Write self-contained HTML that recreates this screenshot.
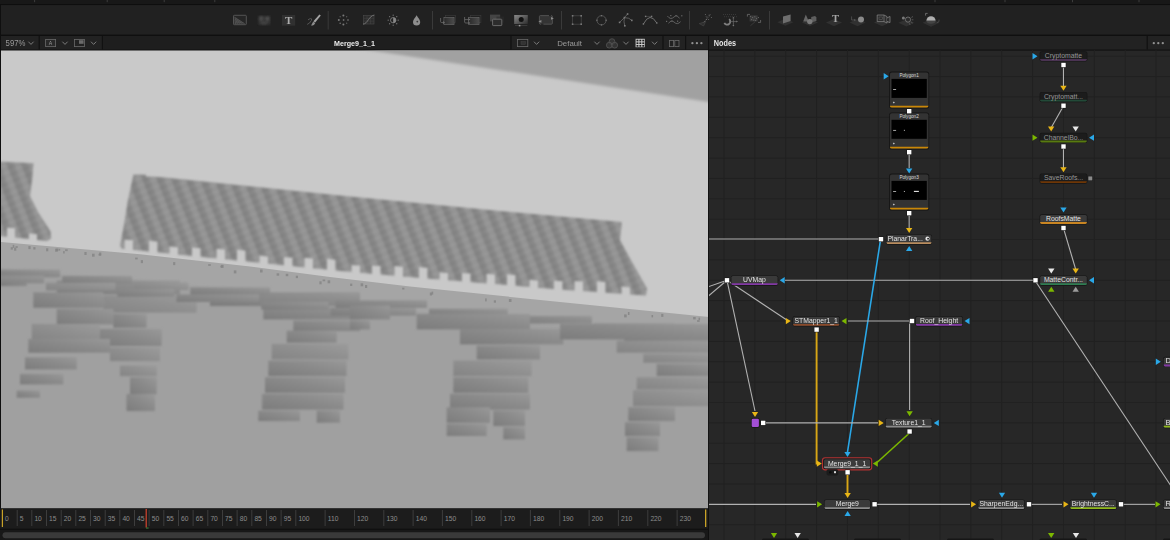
<!DOCTYPE html>
<html lang="en"><head><meta charset="utf-8"><title>Fusion - Merge9_1_1</title>
<style>html,body{margin:0;padding:0;background:#242424;width:1170px;height:540px;overflow:hidden}svg{display:block}text{white-space:pre}</style>
</head><body>
<svg width="1170" height="540" viewBox="0 0 1170 540" font-family="'Liberation Sans', sans-serif">
<defs>
<pattern id="roof" width="14.4" height="10" patternUnits="userSpaceOnUse" patternTransform="skewX(21)">
 <rect width="14.4" height="10" fill="#999999"/>
 <rect x="0" width="7.4" height="10" fill="#848484"/>
 <rect x="7.4" y="0" width="7" height="3" fill="#8f8f8f"/>
 <rect x="0" y="5" width="7.4" height="2.4" fill="#7e7e7e"/>
</pattern>
<filter id="b3" x="-3%" y="-8%" width="106%" height="116%"><feGaussianBlur stdDeviation="1.3"/></filter>
<linearGradient id="brk" x1="0" x2="1" y1="1" y2="0">
 <stop offset="0" stop-color="#7c7c7c"/><stop offset="0.55" stop-color="#8a8a8a"/><stop offset="1" stop-color="#989898"/>
</linearGradient>
<linearGradient id="brk2" x1="0" x2="1" y1="1" y2="0">
 <stop offset="0" stop-color="#848484"/><stop offset="0.55" stop-color="#909090"/><stop offset="1" stop-color="#9b9b9b"/>
</linearGradient>
<linearGradient id="tg" x1="0" x2="1" y1="0" y2="0"><stop offset="0" stop-color="#2c2c2c"/><stop offset="1" stop-color="#4a4a4a"/></linearGradient>
<linearGradient id="tg2" x1="0" x2="1" y1="0" y2="1"><stop offset="0" stop-color="#8a8a8a"/><stop offset="1" stop-color="#2e2e2e"/></linearGradient>
<filter id="b0"><feGaussianBlur stdDeviation="0.5"/></filter>
<filter id="b1" x="-5%" y="-5%" width="110%" height="110%"><feGaussianBlur stdDeviation="0.8"/></filter>
<filter id="b2" x="-5%" y="-20%" width="110%" height="140%"><feGaussianBlur stdDeviation="1.6"/></filter>
<clipPath id="vw"><rect x="1" y="50.6" width="707.1" height="457.7"/></clipPath>
<clipPath id="np"><rect x="709" y="50.7" width="461" height="490"/></clipPath>
</defs>
<rect width="1170" height="540" fill="#242424"/>
<rect width="1170" height="4.3" fill="#181818"/>
<rect x="34.1" y="0" width="1" height="2.2" fill="#3c3c3c"/>
<rect x="106.7" y="0" width="1" height="2.2" fill="#3c3c3c"/>
<rect x="163.7" y="0" width="1" height="2.2" fill="#3c3c3c"/>
<rect x="214.3" y="0" width="1" height="2.2" fill="#3c3c3c"/>
<rect x="934.5" y="0" width="1" height="2.2" fill="#3c3c3c"/>
<rect x="1004.5" y="0" width="1" height="2.2" fill="#3c3c3c"/>
<rect x="1072.0" y="0" width="1" height="2.2" fill="#3c3c3c"/>
<rect x="1138.5" y="0" width="1" height="2.2" fill="#3c3c3c"/>
<rect y="4" width="1170" height="1.2" fill="#0e0e0e"/>
<rect y="5.2" width="1170" height="29.4" fill="#212121"/>
<rect y="34.6" width="1170" height="1.4" fill="#0f0f0f"/>
<rect y="36" width="1170" height="13.6" fill="#222222"/>
<rect x="103" y="36" width="407.4" height="13.6" fill="#1e1e1e"/>
<rect y="49.6" width="1170" height="1.1" fill="#0d0d0d"/>
<g clip-path="url(#vw)">
<rect x="0" y="50" width="709" height="460" fill="#c9c9c9"/>
<polygon points="355,48 712,48 712,102.5" fill="#a1a1a1" filter="url(#b2)"/>
<polygon points="-2,241.8 140,254.2 250,266.5 330,276.9 410,286.6 560,302.0 712,317.4 712,512 -2,512" fill="#a5a5a5"/>
<polygon points="-2,268.8 140,280.2 250,291.7 330,301.6 410,310.7 560,325.1 712,339.4 712,512 -2,512" fill="#a0a0a0" filter="url(#b2)"/>
<g filter="url(#b1)">
<rect x="0.0" y="272.3" width="26.7" height="13.8" fill="url(#brk)"/>
<rect x="56.7" y="280.6" width="123.3" height="13.8" fill="url(#brk)"/>
<rect x="33.3" y="292.3" width="70.0" height="15.5" fill="url(#brk)"/>
<rect x="103.3" y="295.6" width="93.3" height="17.1" fill="url(#brk2)"/>
<rect x="56.7" y="308.9" width="56.7" height="15.5" fill="url(#brk)"/>
<rect x="113.3" y="313.9" width="33.3" height="13.8" fill="url(#brk)"/>
<rect x="31.7" y="323.9" width="68.3" height="15.5" fill="url(#brk2)"/>
<rect x="100.0" y="328.9" width="61.7" height="17.1" fill="url(#brk)"/>
<rect x="28.3" y="338.9" width="81.7" height="13.8" fill="url(#brk)"/>
<rect x="110.0" y="347.3" width="50.0" height="13.8" fill="url(#brk2)"/>
<rect x="25.0" y="357.3" width="51.7" height="12.1" fill="url(#brk)"/>
<rect x="120.0" y="365.6" width="36.7" height="10.5" fill="url(#brk2)"/>
<rect x="20.0" y="373.9" width="43.3" height="10.5" fill="url(#brk)"/>
<rect x="130.0" y="377.3" width="26.7" height="17.1" fill="url(#brk)"/>
<rect x="16.7" y="390.6" width="23.3" height="7.1" fill="url(#brk)"/>
<rect x="126.7" y="393.9" width="26.7" height="15.5" fill="url(#brk)"/>
<rect x="210.0" y="292.3" width="150.0" height="13.8" fill="url(#brk)"/>
<rect x="263.3" y="307.3" width="96.7" height="12.1" fill="url(#brk)"/>
<rect x="293.3" y="320.6" width="66.7" height="10.5" fill="url(#brk)"/>
<rect x="286.7" y="330.6" width="50.0" height="12.1" fill="url(#brk)"/>
<rect x="271.7" y="343.9" width="76.7" height="15.5" fill="url(#brk2)"/>
<rect x="268.3" y="360.6" width="78.3" height="15.5" fill="url(#brk)"/>
<rect x="265.0" y="377.3" width="80.0" height="15.5" fill="url(#brk)"/>
<rect x="261.7" y="393.9" width="81.7" height="15.5" fill="url(#brk2)"/>
<rect x="-10.0" y="269.6" width="70.1" height="7.6" fill="url(#brk)"/>
<rect x="62.1" y="276.0" width="70.1" height="7.6" fill="url(#brk)"/>
<rect x="134.3" y="282.4" width="54.1" height="7.6" fill="url(#brk2)"/>
<rect x="190.3" y="287.4" width="79.8" height="7.6" fill="url(#brk)"/>
<rect x="335.4" y="300.3" width="91.6" height="7.6" fill="url(#brk)"/>
<rect x="429.0" y="308.7" width="78.7" height="7.6" fill="url(#brk)"/>
<rect x="509.7" y="315.9" width="82.2" height="7.6" fill="url(#brk)"/>
<rect x="593.9" y="323.4" width="80.4" height="7.6" fill="url(#brk)"/>
<rect x="676.3" y="330.7" width="46.6" height="7.6" fill="url(#brk)"/>
<rect x="-35.0" y="275.6" width="79.0" height="7.6" fill="url(#brk)"/>
<rect x="46.0" y="282.8" width="69.4" height="7.6" fill="url(#brk2)"/>
<rect x="117.4" y="289.1" width="57.0" height="7.6" fill="url(#brk)"/>
<rect x="176.4" y="294.4" width="82.7" height="7.6" fill="url(#brk)"/>
<rect x="261.2" y="301.9" width="67.4" height="7.6" fill="url(#brk)"/>
<rect x="330.6" y="308.1" width="85.5" height="7.6" fill="url(#brk)"/>
<rect x="572.6" y="329.7" width="49.5" height="7.6" fill="url(#brk)"/>
<rect x="624.1" y="334.2" width="100.5" height="7.6" fill="url(#brk)"/>
<rect x="350.0" y="305.6" width="40.0" height="13.8" fill="url(#brk)"/>
<rect x="350.0" y="320.6" width="20.0" height="8.8" fill="url(#brk)"/>
<rect x="416.7" y="313.9" width="113.3" height="15.5" fill="url(#brk)"/>
<rect x="460.0" y="328.9" width="103.3" height="15.5" fill="url(#brk)"/>
<rect x="476.7" y="345.6" width="63.3" height="13.8" fill="url(#brk)"/>
<rect x="453.3" y="360.6" width="78.3" height="15.5" fill="url(#brk2)"/>
<rect x="453.3" y="377.3" width="75.0" height="15.5" fill="url(#brk)"/>
<rect x="450.0" y="393.9" width="78.3" height="15.5" fill="url(#brk)"/>
<rect x="560.0" y="323.9" width="150.0" height="15.5" fill="url(#brk)"/>
<rect x="616.7" y="340.6" width="93.3" height="12.1" fill="url(#brk2)"/>
<rect x="643.3" y="353.9" width="66.7" height="8.8" fill="url(#brk2)"/>
<rect x="656.7" y="363.9" width="53.3" height="12.1" fill="url(#brk)"/>
<rect x="636.7" y="377.3" width="73.3" height="12.1" fill="url(#brk2)"/>
<rect x="633.3" y="390.6" width="76.7" height="15.5" fill="url(#brk)"/>
<rect x="126.7" y="395.6" width="28.3" height="15.5" fill="url(#brk)"/>
<rect x="263.3" y="393.9" width="80.0" height="15.5" fill="url(#brk)"/>
<rect x="258.3" y="410.6" width="41.7" height="10.5" fill="url(#brk)"/>
<rect x="316.7" y="410.6" width="23.3" height="12.1" fill="url(#brk)"/>
<rect x="450.0" y="393.9" width="80.0" height="15.5" fill="url(#brk)"/>
<rect x="446.7" y="407.3" width="43.3" height="15.5" fill="url(#brk)"/>
<rect x="493.3" y="410.6" width="31.7" height="15.5" fill="url(#brk)"/>
<rect x="446.7" y="423.9" width="40.0" height="12.1" fill="url(#brk)"/>
<rect x="503.3" y="427.3" width="21.7" height="12.1" fill="url(#brk)"/>
<rect x="633.3" y="390.6" width="76.7" height="15.5" fill="url(#brk2)"/>
<rect x="628.3" y="407.3" width="46.7" height="13.8" fill="url(#brk)"/>
<rect x="625.0" y="422.3" width="35.0" height="13.8" fill="url(#brk)"/>
<rect x="626.7" y="437.3" width="31.7" height="13.8" fill="url(#brk)"/>
</g>
<linearGradient id="rg1" gradientUnits="userSpaceOnUse" x1="0" y1="0" x2="12.41" y2="-4.97" spreadMethod="repeat"><stop offset="0" stop-color="#818181"/><stop offset="0.28" stop-color="#868686"/><stop offset="0.55" stop-color="#989898"/><stop offset="0.8" stop-color="#969696"/><stop offset="1" stop-color="#818181"/></linearGradient>
<linearGradient id="rg2" gradientUnits="userSpaceOnUse" x1="0" y1="0" x2="2.6" y2="6.4" spreadMethod="repeat"><stop offset="0" stop-color="#707070"/><stop offset="0.5" stop-color="#a8a8a8"/><stop offset="1" stop-color="#707070"/></linearGradient>
<g filter="url(#b1)">
<polygon points="133.5,174.5 146.0,174.8 146.0,176.4 160.0,177.0 350.0,196.5 500.0,211.0 621.5,222.0 621.5,226.0 620.0,240.0 632.0,262.0 647.0,288.5 646.0,295.5 642.0,295.2 630.0,294.4 630.0,287.2 621.5,286.6 621.5,293.8 605.5,292.7 605.5,281.9 597.0,281.3 597.0,292.1 583.0,291.1 583.0,281.5 574.5,280.9 574.5,290.5 562.5,289.7 562.5,281.3 554.0,280.6 554.0,289.0 538.0,287.7 538.0,280.5 529.5,279.8 529.5,287.0 515.5,285.8 515.5,275.0 507.0,274.3 507.0,285.1 495.0,284.1 495.0,274.5 486.5,273.8 486.5,283.4 470.5,282.0 470.5,273.6 462.0,272.9 462.0,281.3 448.0,280.2 448.0,273.0 439.5,272.3 439.5,279.5 427.5,278.5 427.5,267.7 419.0,266.9 419.0,277.8 403.0,276.4 403.0,266.8 394.5,266.1 394.5,275.7 380.5,274.5 380.5,266.1 372.0,265.4 372.0,273.8 360.0,272.8 360.0,265.6 351.5,264.9 351.5,272.1 335.5,270.5 335.5,259.7 327.0,258.8 327.0,269.6 313.0,268.2 313.0,258.6 304.5,257.8 304.5,267.4 292.5,266.1 292.5,257.7 284.0,256.9 284.0,265.3 268.0,263.6 268.0,256.4 259.5,255.6 259.5,262.8 245.5,261.3 245.5,250.5 237.0,249.7 237.0,260.5 225.0,259.2 225.0,249.6 216.5,248.8 216.5,258.4 200.5,256.7 200.5,248.3 192.0,247.5 192.0,255.9 178.0,254.4 178.0,247.2 169.5,246.4 169.5,253.6 157.5,252.3 157.5,241.5 149.0,240.7 149.0,251.5 133.0,249.8 133.0,240.2 124.5,239.4 124.5,249.0 122.0,248.7 120.0,246.0 124.0,225.0 128.0,200.0" fill="url(#rg1)"/>
<polygon points="133.5,174.5 146.0,174.8 146.0,176.4 160.0,177.0 350.0,196.5 500.0,211.0 621.5,222.0 621.5,226.0 620.0,240.0 632.0,262.0 647.0,288.5 646.0,295.5 642.0,295.2 630.0,294.4 630.0,287.2 621.5,286.6 621.5,293.8 605.5,292.7 605.5,281.9 597.0,281.3 597.0,292.1 583.0,291.1 583.0,281.5 574.5,280.9 574.5,290.5 562.5,289.7 562.5,281.3 554.0,280.6 554.0,289.0 538.0,287.7 538.0,280.5 529.5,279.8 529.5,287.0 515.5,285.8 515.5,275.0 507.0,274.3 507.0,285.1 495.0,284.1 495.0,274.5 486.5,273.8 486.5,283.4 470.5,282.0 470.5,273.6 462.0,272.9 462.0,281.3 448.0,280.2 448.0,273.0 439.5,272.3 439.5,279.5 427.5,278.5 427.5,267.7 419.0,266.9 419.0,277.8 403.0,276.4 403.0,266.8 394.5,266.1 394.5,275.7 380.5,274.5 380.5,266.1 372.0,265.4 372.0,273.8 360.0,272.8 360.0,265.6 351.5,264.9 351.5,272.1 335.5,270.5 335.5,259.7 327.0,258.8 327.0,269.6 313.0,268.2 313.0,258.6 304.5,257.8 304.5,267.4 292.5,266.1 292.5,257.7 284.0,256.9 284.0,265.3 268.0,263.6 268.0,256.4 259.5,255.6 259.5,262.8 245.5,261.3 245.5,250.5 237.0,249.7 237.0,260.5 225.0,259.2 225.0,249.6 216.5,248.8 216.5,258.4 200.5,256.7 200.5,248.3 192.0,247.5 192.0,255.9 178.0,254.4 178.0,247.2 169.5,246.4 169.5,253.6 157.5,252.3 157.5,241.5 149.0,240.7 149.0,251.5 133.0,249.8 133.0,240.2 124.5,239.4 124.5,249.0 122.0,248.7 120.0,246.0 124.0,225.0 128.0,200.0" fill="url(#rg2)" opacity="0.13"/>
<polygon points="-3.0,161.6 33.5,163.2 32.5,176.0 30.0,196.0 38.0,212.0 50.5,231.5 51.0,238.5 47.0,240.9 37.0,239.9 37.0,234.2 29.0,233.3 29.0,239.0 15.0,237.6 15.0,228.3 7.0,227.4 7.0,236.7 -3.0,235.7" fill="url(#rg1)"/>
<polygon points="-3.0,161.6 33.5,163.2 32.5,176.0 30.0,196.0 38.0,212.0 50.5,231.5 51.0,238.5 47.0,240.9 37.0,239.9 37.0,234.2 29.0,233.3 29.0,239.0 15.0,237.6 15.0,228.3 7.0,227.4 7.0,236.7 -3.0,235.7" fill="url(#rg2)" opacity="0.13"/>
</g>
<rect x="327.6" y="280.3" width="2.6" height="3" fill="#858585" opacity="0.85" filter="url(#b0)"/>
<rect x="135.1" y="257.6" width="2.6" height="1.8" fill="#858585" opacity="0.85" filter="url(#b0)"/>
<rect x="295.8" y="275.7" width="2.2" height="2.4" fill="#858585" opacity="0.85" filter="url(#b0)"/>
<rect x="693.1" y="317.0" width="2.6" height="2.4" fill="#858585" opacity="0.85" filter="url(#b0)"/>
<rect x="698.5" y="317.6" width="1.6" height="2.4" fill="#858585" opacity="0.85" filter="url(#b0)"/>
<rect x="697.1" y="320.1" width="2.6" height="1.8" fill="#858585" opacity="0.85" filter="url(#b0)"/>
<rect x="33.3" y="247.1" width="2.2" height="2.4" fill="#858585" opacity="0.85" filter="url(#b0)"/>
<rect x="10.7" y="247.2" width="2.2" height="2.4" fill="#858585" opacity="0.85" filter="url(#b0)"/>
<rect x="55.1" y="248.7" width="2.6" height="3" fill="#858585" opacity="0.85" filter="url(#b0)"/>
<rect x="173.1" y="262.1" width="2.2" height="3" fill="#858585" opacity="0.85" filter="url(#b0)"/>
<rect x="319.4" y="281.3" width="2.2" height="3" fill="#858585" opacity="0.85" filter="url(#b0)"/>
<rect x="98.5" y="253.8" width="2.6" height="1.8" fill="#858585" opacity="0.85" filter="url(#b0)"/>
<rect x="220.3" y="265.7" width="2.6" height="1.8" fill="#858585" opacity="0.85" filter="url(#b0)"/>
<rect x="508.9" y="299.0" width="2.6" height="3" fill="#858585" opacity="0.85" filter="url(#b0)"/>
<rect x="140.8" y="260.1" width="2.2" height="3" fill="#858585" opacity="0.85" filter="url(#b0)"/>
<rect x="58.6" y="248.8" width="1.6" height="1.8" fill="#858585" opacity="0.85" filter="url(#b0)"/>
<rect x="360.6" y="283.3" width="2.6" height="3" fill="#858585" opacity="0.85" filter="url(#b0)"/>
<rect x="276.6" y="273.3" width="2.6" height="2.4" fill="#858585" opacity="0.85" filter="url(#b0)"/>
<rect x="208.2" y="264.1" width="2.6" height="1.8" fill="#858585" opacity="0.85" filter="url(#b0)"/>
<rect x="92.0" y="253.7" width="2.6" height="3" fill="#858585" opacity="0.85" filter="url(#b0)"/>
<rect x="431.6" y="291.6" width="1.6" height="3" fill="#858585" opacity="0.85" filter="url(#b0)"/>
<rect x="15.5" y="246.1" width="2.2" height="1.8" fill="#858585" opacity="0.85" filter="url(#b0)"/>
<rect x="46.1" y="248.3" width="2.2" height="3" fill="#858585" opacity="0.85" filter="url(#b0)"/>
<rect x="402.2" y="287.7" width="2.2" height="1.8" fill="#858585" opacity="0.85" filter="url(#b0)"/>
<rect x="624.1" y="314.4" width="2.6" height="3" fill="#858585" opacity="0.85" filter="url(#b0)"/>
<rect x="485.1" y="298.4" width="1.6" height="3" fill="#858585" opacity="0.85" filter="url(#b0)"/>
<rect x="28.4" y="246.1" width="2.2" height="3" fill="#858585" opacity="0.85" filter="url(#b0)"/>
<rect x="221.0" y="264.9" width="2.6" height="3" fill="#858585" opacity="0.85" filter="url(#b0)"/>
<rect x="56.1" y="248.7" width="2.2" height="2.4" fill="#858585" opacity="0.85" filter="url(#b0)"/>
<rect x="99.1" y="252.5" width="2.2" height="3" fill="#858585" opacity="0.85" filter="url(#b0)"/>
<rect x="260.0" y="269.5" width="2.6" height="3" fill="#858585" opacity="0.85" filter="url(#b0)"/>
<rect x="493.8" y="300.3" width="2.2" height="2.4" fill="#858585" opacity="0.85" filter="url(#b0)"/>
<rect x="63.1" y="251.1" width="1.6" height="2.4" fill="#858585" opacity="0.85" filter="url(#b0)"/>
<rect x="661.2" y="313.9" width="2.2" height="3" fill="#858585" opacity="0.85" filter="url(#b0)"/>
<rect x="14.1" y="247.7" width="2.2" height="3" fill="#858585" opacity="0.85" filter="url(#b0)"/>
<rect x="12.7" y="244.9" width="1.6" height="3" fill="#858585" opacity="0.85" filter="url(#b0)"/>
<rect x="84.4" y="252.0" width="2.2" height="3" fill="#858585" opacity="0.85" filter="url(#b0)"/>
<rect x="233.8" y="270.4" width="2.6" height="3" fill="#858585" opacity="0.85" filter="url(#b0)"/>
<rect x="322.6" y="279.5" width="2.6" height="1.8" fill="#858585" opacity="0.85" filter="url(#b0)"/>
<rect x="365.0" y="285.0" width="2.2" height="3" fill="#858585" opacity="0.85" filter="url(#b0)"/>
<rect x="65.1" y="249.3" width="2.6" height="1.8" fill="#858585" opacity="0.85" filter="url(#b0)"/>
<rect x="350.1" y="283.6" width="2.2" height="2.4" fill="#858585" opacity="0.85" filter="url(#b0)"/>
<rect x="627.9" y="312.0" width="1.6" height="3" fill="#858585" opacity="0.85" filter="url(#b0)"/>
<rect x="429.8" y="292.5" width="2.2" height="3" fill="#858585" opacity="0.85" filter="url(#b0)"/>
<rect x="651.5" y="315.0" width="1.6" height="2.4" fill="#858585" opacity="0.85" filter="url(#b0)"/>
<rect x="285.7" y="273.8" width="2.6" height="2.4" fill="#858585" opacity="0.85" filter="url(#b0)"/>
</g>
<rect x="0" y="5" width="1" height="535" fill="#0f0f0f"/>
<rect x="0" y="508.3" width="708.2" height="32" fill="#181818"/>
<rect x="1" y="509" width="707.1" height="19.5" fill="#1c1c1c"/>
<text x="5.1" y="521.2" font-size="7.3" fill="#8c8c8c" text-anchor="start" textLength="3.73" lengthAdjust="spacingAndGlyphs">0</text>
<rect x="16.7" y="510" width="1" height="16" fill="#3d3d3d"/>
<text x="19.8" y="521.2" font-size="7.3" fill="#8c8c8c" text-anchor="start" textLength="3.73" lengthAdjust="spacingAndGlyphs">5</text>
<rect x="31.3" y="510" width="1" height="16" fill="#3d3d3d"/>
<text x="34.4" y="521.2" font-size="7.3" fill="#8c8c8c" text-anchor="start" textLength="7.47" lengthAdjust="spacingAndGlyphs">10</text>
<rect x="46.0" y="510" width="1" height="16" fill="#3d3d3d"/>
<text x="49.1" y="521.2" font-size="7.3" fill="#8c8c8c" text-anchor="start" textLength="7.47" lengthAdjust="spacingAndGlyphs">15</text>
<rect x="60.7" y="510" width="1" height="16" fill="#3d3d3d"/>
<text x="63.8" y="521.2" font-size="7.3" fill="#8c8c8c" text-anchor="start" textLength="7.47" lengthAdjust="spacingAndGlyphs">20</text>
<rect x="75.3" y="510" width="1" height="16" fill="#3d3d3d"/>
<text x="78.4" y="521.2" font-size="7.3" fill="#8c8c8c" text-anchor="start" textLength="7.47" lengthAdjust="spacingAndGlyphs">25</text>
<rect x="90.0" y="510" width="1" height="16" fill="#3d3d3d"/>
<text x="93.1" y="521.2" font-size="7.3" fill="#8c8c8c" text-anchor="start" textLength="7.47" lengthAdjust="spacingAndGlyphs">30</text>
<rect x="104.7" y="510" width="1" height="16" fill="#3d3d3d"/>
<text x="107.8" y="521.2" font-size="7.3" fill="#8c8c8c" text-anchor="start" textLength="7.47" lengthAdjust="spacingAndGlyphs">35</text>
<rect x="119.3" y="510" width="1" height="16" fill="#3d3d3d"/>
<text x="122.4" y="521.2" font-size="7.3" fill="#8c8c8c" text-anchor="start" textLength="7.47" lengthAdjust="spacingAndGlyphs">40</text>
<rect x="134.0" y="510" width="1" height="16" fill="#3d3d3d"/>
<text x="137.1" y="521.2" font-size="7.3" fill="#8c8c8c" text-anchor="start" textLength="7.47" lengthAdjust="spacingAndGlyphs">45</text>
<rect x="148.6" y="510" width="1" height="16" fill="#3d3d3d"/>
<text x="151.7" y="521.2" font-size="7.3" fill="#8c8c8c" text-anchor="start" textLength="7.47" lengthAdjust="spacingAndGlyphs">50</text>
<rect x="163.3" y="510" width="1" height="16" fill="#3d3d3d"/>
<text x="166.4" y="521.2" font-size="7.3" fill="#8c8c8c" text-anchor="start" textLength="7.47" lengthAdjust="spacingAndGlyphs">55</text>
<rect x="178.0" y="510" width="1" height="16" fill="#3d3d3d"/>
<text x="181.1" y="521.2" font-size="7.3" fill="#8c8c8c" text-anchor="start" textLength="7.47" lengthAdjust="spacingAndGlyphs">60</text>
<rect x="192.6" y="510" width="1" height="16" fill="#3d3d3d"/>
<text x="195.7" y="521.2" font-size="7.3" fill="#8c8c8c" text-anchor="start" textLength="7.47" lengthAdjust="spacingAndGlyphs">65</text>
<rect x="207.3" y="510" width="1" height="16" fill="#3d3d3d"/>
<text x="210.4" y="521.2" font-size="7.3" fill="#8c8c8c" text-anchor="start" textLength="7.47" lengthAdjust="spacingAndGlyphs">70</text>
<rect x="222.0" y="510" width="1" height="16" fill="#3d3d3d"/>
<text x="225.1" y="521.2" font-size="7.3" fill="#8c8c8c" text-anchor="start" textLength="7.47" lengthAdjust="spacingAndGlyphs">75</text>
<rect x="236.6" y="510" width="1" height="16" fill="#3d3d3d"/>
<text x="239.7" y="521.2" font-size="7.3" fill="#8c8c8c" text-anchor="start" textLength="7.47" lengthAdjust="spacingAndGlyphs">80</text>
<rect x="251.3" y="510" width="1" height="16" fill="#3d3d3d"/>
<text x="254.4" y="521.2" font-size="7.3" fill="#8c8c8c" text-anchor="start" textLength="7.47" lengthAdjust="spacingAndGlyphs">85</text>
<rect x="266.0" y="510" width="1" height="16" fill="#3d3d3d"/>
<text x="269.1" y="521.2" font-size="7.3" fill="#8c8c8c" text-anchor="start" textLength="7.47" lengthAdjust="spacingAndGlyphs">90</text>
<rect x="280.6" y="510" width="1" height="16" fill="#3d3d3d"/>
<text x="283.7" y="521.2" font-size="7.3" fill="#8c8c8c" text-anchor="start" textLength="7.47" lengthAdjust="spacingAndGlyphs">95</text>
<rect x="295.3" y="510" width="1" height="16" fill="#3d3d3d"/>
<text x="298.4" y="521.2" font-size="7.3" fill="#8c8c8c" text-anchor="start" textLength="11.20" lengthAdjust="spacingAndGlyphs">100</text>
<rect x="324.6" y="510" width="1" height="16" fill="#3d3d3d"/>
<text x="327.7" y="521.2" font-size="7.3" fill="#8c8c8c" text-anchor="start" textLength="10.71" lengthAdjust="spacingAndGlyphs">110</text>
<rect x="354.0" y="510" width="1" height="16" fill="#3d3d3d"/>
<text x="357.1" y="521.2" font-size="7.3" fill="#8c8c8c" text-anchor="start" textLength="11.20" lengthAdjust="spacingAndGlyphs">120</text>
<rect x="383.3" y="510" width="1" height="16" fill="#3d3d3d"/>
<text x="386.4" y="521.2" font-size="7.3" fill="#8c8c8c" text-anchor="start" textLength="11.20" lengthAdjust="spacingAndGlyphs">130</text>
<rect x="412.6" y="510" width="1" height="16" fill="#3d3d3d"/>
<text x="415.7" y="521.2" font-size="7.3" fill="#8c8c8c" text-anchor="start" textLength="11.20" lengthAdjust="spacingAndGlyphs">140</text>
<rect x="441.9" y="510" width="1" height="16" fill="#3d3d3d"/>
<text x="445.1" y="521.2" font-size="7.3" fill="#8c8c8c" text-anchor="start" textLength="11.20" lengthAdjust="spacingAndGlyphs">150</text>
<rect x="471.3" y="510" width="1" height="16" fill="#3d3d3d"/>
<text x="474.4" y="521.2" font-size="7.3" fill="#8c8c8c" text-anchor="start" textLength="11.20" lengthAdjust="spacingAndGlyphs">160</text>
<rect x="500.6" y="510" width="1" height="16" fill="#3d3d3d"/>
<text x="503.7" y="521.2" font-size="7.3" fill="#8c8c8c" text-anchor="start" textLength="11.20" lengthAdjust="spacingAndGlyphs">170</text>
<rect x="529.9" y="510" width="1" height="16" fill="#3d3d3d"/>
<text x="533.0" y="521.2" font-size="7.3" fill="#8c8c8c" text-anchor="start" textLength="11.20" lengthAdjust="spacingAndGlyphs">180</text>
<rect x="559.3" y="510" width="1" height="16" fill="#3d3d3d"/>
<text x="562.4" y="521.2" font-size="7.3" fill="#8c8c8c" text-anchor="start" textLength="11.20" lengthAdjust="spacingAndGlyphs">190</text>
<rect x="588.6" y="510" width="1" height="16" fill="#3d3d3d"/>
<text x="591.7" y="521.2" font-size="7.3" fill="#8c8c8c" text-anchor="start" textLength="11.20" lengthAdjust="spacingAndGlyphs">200</text>
<rect x="617.9" y="510" width="1" height="16" fill="#3d3d3d"/>
<text x="621.0" y="521.2" font-size="7.3" fill="#8c8c8c" text-anchor="start" textLength="11.20" lengthAdjust="spacingAndGlyphs">210</text>
<rect x="647.3" y="510" width="1" height="16" fill="#3d3d3d"/>
<text x="650.4" y="521.2" font-size="7.3" fill="#8c8c8c" text-anchor="start" textLength="11.20" lengthAdjust="spacingAndGlyphs">220</text>
<rect x="676.6" y="510" width="1" height="16" fill="#3d3d3d"/>
<text x="679.7" y="521.2" font-size="7.3" fill="#8c8c8c" text-anchor="start" textLength="11.20" lengthAdjust="spacingAndGlyphs">230</text>
<rect x="1.8" y="509.5" width="1.2" height="17.5" fill="#c9a227"/>
<rect x="705" y="509.5" width="1.3" height="17.5" fill="#c9a227"/>
<rect x="145.6" y="509" width="1.2" height="18.5" fill="#d4452f"/>
<rect x="146.0" y="527.6" width="2.6" height="1" fill="#3f9a3f"/>
<rect x="0" y="528.8" width="708" height="1" fill="#101010"/>
<rect x="2.5" y="532.3" width="702.5" height="5.9" rx="2.95" fill="#3a3a3a"/>
<rect x="708.1" y="36" width="1.1" height="504" fill="#0f0f0f"/>
<g clip-path="url(#np)">
<rect x="709" y="50.7" width="461" height="490" fill="#272727"/>
<rect x="723.5" y="50" width="1" height="490" fill="#212121"/>
<rect x="754.4" y="50" width="1" height="490" fill="#212121"/>
<rect x="785.2" y="50" width="1" height="490" fill="#212121"/>
<rect x="816.1" y="50" width="1" height="490" fill="#212121"/>
<rect x="846.9" y="50" width="1" height="490" fill="#212121"/>
<rect x="877.8" y="50" width="1" height="490" fill="#212121"/>
<rect x="908.7" y="50" width="1" height="490" fill="#212121"/>
<rect x="939.5" y="50" width="1" height="490" fill="#212121"/>
<rect x="970.4" y="50" width="1" height="490" fill="#212121"/>
<rect x="1001.2" y="50" width="1" height="490" fill="#212121"/>
<rect x="1032.1" y="50" width="1" height="490" fill="#212121"/>
<rect x="1063.0" y="50" width="1" height="490" fill="#212121"/>
<rect x="1093.8" y="50" width="1" height="490" fill="#212121"/>
<rect x="1124.7" y="50" width="1" height="490" fill="#212121"/>
<rect x="1155.5" y="50" width="1" height="490" fill="#212121"/>
<rect x="709" y="55.7" width="461" height="1" fill="#212121"/>
<rect x="709" y="76.1" width="461" height="1" fill="#212121"/>
<rect x="709" y="96.4" width="461" height="1" fill="#212121"/>
<rect x="709" y="116.8" width="461" height="1" fill="#212121"/>
<rect x="709" y="137.2" width="461" height="1" fill="#212121"/>
<rect x="709" y="157.6" width="461" height="1" fill="#212121"/>
<rect x="709" y="177.9" width="461" height="1" fill="#212121"/>
<rect x="709" y="198.3" width="461" height="1" fill="#212121"/>
<rect x="709" y="218.7" width="461" height="1" fill="#212121"/>
<rect x="709" y="239.0" width="461" height="1" fill="#212121"/>
<rect x="709" y="259.4" width="461" height="1" fill="#212121"/>
<rect x="709" y="279.8" width="461" height="1" fill="#212121"/>
<rect x="709" y="300.1" width="461" height="1" fill="#212121"/>
<rect x="709" y="320.5" width="461" height="1" fill="#212121"/>
<rect x="709" y="340.9" width="461" height="1" fill="#212121"/>
<rect x="709" y="361.2" width="461" height="1" fill="#212121"/>
<rect x="709" y="381.6" width="461" height="1" fill="#212121"/>
<rect x="709" y="402.0" width="461" height="1" fill="#212121"/>
<rect x="709" y="422.4" width="461" height="1" fill="#212121"/>
<rect x="709" y="442.7" width="461" height="1" fill="#212121"/>
<rect x="709" y="463.1" width="461" height="1" fill="#212121"/>
<rect x="709" y="483.5" width="461" height="1" fill="#212121"/>
<rect x="709" y="503.8" width="461" height="1" fill="#212121"/>
<rect x="709" y="524.2" width="461" height="1" fill="#212121"/>
<line x1="1063.46" y1="65.2" x2="1063.46" y2="86.94" stroke="#b2b2b2" stroke-width="1.1"/>
<line x1="1063.46" y1="105.94" x2="1051.16" y2="127.68" stroke="#b2b2b2" stroke-width="1.1"/>
<line x1="1063.46" y1="146.68" x2="1063.46" y2="168.42000000000002" stroke="#b2b2b2" stroke-width="1.1"/>
<line x1="1063.46" y1="228.16000000000003" x2="1075.66" y2="269.27000000000004" stroke="#b2b2b2" stroke-width="1.1"/>
<line x1="1035.5" y1="280.27000000000004" x2="785" y2="280.27000000000004" stroke="#b2b2b2" stroke-width="1.1"/>
<line x1="1035.5" y1="281.27000000000004" x2="1172" y2="487.5" stroke="#b2b2b2" stroke-width="1.1"/>
<line x1="909.16" y1="152" x2="909.16" y2="168" stroke="#b2b2b2" stroke-width="1.1"/>
<line x1="909.16" y1="213" x2="909.16" y2="228" stroke="#b2b2b2" stroke-width="1.1"/>
<line x1="881" y1="239" x2="708" y2="239" stroke="#b2b2b2" stroke-width="1.1"/>
<line x1="880.5" y1="240" x2="847.5" y2="452" stroke="#2aa8e8" stroke-width="1.6"/>
<line x1="727" y1="280.27000000000004" x2="706" y2="287.5" stroke="#b2b2b2" stroke-width="1.1"/>
<line x1="727" y1="280.27000000000004" x2="706" y2="298" stroke="#b2b2b2" stroke-width="1.1"/>
<line x1="727" y1="280.27000000000004" x2="755" y2="411" stroke="#b2b2b2" stroke-width="1.1"/>
<line x1="727" y1="280.27000000000004" x2="786" y2="319.5" stroke="#b2b2b2" stroke-width="1.1"/>
<line x1="912" y1="321.01" x2="848" y2="321.01" stroke="#b2b2b2" stroke-width="1.1"/>
<line x1="909.6" y1="321.01" x2="909.6" y2="410" stroke="#b2b2b2" stroke-width="1.1"/>
<polyline points="816.6,331 816.6,463.6 818,463.6" fill="none" stroke="#d8a616" stroke-width="1.9"/>
<line x1="765" y1="422.86" x2="878" y2="422.86" stroke="#b2b2b2" stroke-width="1.1"/>
<line x1="909.5" y1="433" x2="877" y2="462.5" stroke="#7cb800" stroke-width="1.6"/>
<line x1="847.5" y1="474" x2="847.5" y2="493" stroke="#d8a616" stroke-width="1.9"/>
<line x1="708" y1="504.34000000000003" x2="816" y2="504.34000000000003" stroke="#b2b2b2" stroke-width="1.1"/>
<line x1="877" y1="504.34000000000003" x2="970" y2="504.34000000000003" stroke="#b2b2b2" stroke-width="1.1"/>
<line x1="1031" y1="504.34000000000003" x2="1062" y2="504.34000000000003" stroke="#b2b2b2" stroke-width="1.1"/>
<line x1="1123" y1="504.34000000000003" x2="1155" y2="504.34000000000003" stroke="#b2b2b2" stroke-width="1.1"/>
<rect x="1039.6" y="51.3" width="47.8" height="10.3" rx="2" fill="#161616"/>
<rect x="1040.2" y="51.9" width="46.6" height="9.0" rx="1.5" fill="#1c1c1c"/>
<path d="M1040.2,59.1 H1086.8 V59.6 Q1086.8,60.9 1085.3,60.9 H1041.7 Q1040.2,60.9 1040.2,59.6 Z" fill="#4a3352"/>
<text x="1063.46" y="58.1" font-size="7.6" fill="#969696" text-anchor="middle" textLength="37.25" lengthAdjust="spacingAndGlyphs">Cryptomatte</text>
<polygon points="1032.5,53.1 1032.5,59.4 1037.5,56.2" fill="#2aa8e8" />
<rect x="1060.8" y="62.3" width="5.4" height="5.4" fill="#161616"/>
<rect x="1061.3" y="62.8" width="4.4" height="4.4" fill="#fff"/>
<polygon points="1060.3,85.8 1066.6,85.8 1063.5,90.8" fill="#e9b616" />
<rect x="1039.6" y="92.0" width="47.8" height="10.3" rx="2" fill="#161616"/>
<rect x="1040.2" y="92.6" width="46.6" height="9.0" rx="1.5" fill="#1c1c1c"/>
<path d="M1040.2,99.8 H1086.8 V100.3 Q1086.8,101.6 1085.3,101.6 H1041.7 Q1040.2,101.6 1040.2,100.3 Z" fill="#224a38"/>
<text x="1063.46" y="98.84" font-size="7.6" fill="#969696" text-anchor="middle" textLength="39.15" lengthAdjust="spacingAndGlyphs">Cryptomatt...</text>
<rect x="1060.8" y="103.0" width="5.4" height="5.4" fill="#161616"/>
<rect x="1061.3" y="103.5" width="4.4" height="4.4" fill="#fff"/>
<polygon points="1048.0,126.6 1054.3,126.6 1051.2,131.6" fill="#e9b616" />
<polygon points="1072.5,126.6 1078.8,126.6 1075.7,131.6" fill="#e8e8e8" />
<rect x="1039.6" y="132.8" width="47.8" height="10.3" rx="2" fill="#161616"/>
<rect x="1040.2" y="133.4" width="46.6" height="9.0" rx="1.5" fill="#1c1c1c"/>
<path d="M1040.2,140.6 H1086.8 V141.1 Q1086.8,142.4 1085.3,142.4 H1041.7 Q1040.2,142.4 1040.2,141.1 Z" fill="#587a10"/>
<text x="1063.46" y="139.58" font-size="7.6" fill="#969696" text-anchor="middle" textLength="39.54" lengthAdjust="spacingAndGlyphs">ChannelBo...</text>
<polygon points="1032.5,134.5 1032.5,140.8 1037.5,137.7" fill="#7cb800" />
<polygon points="1094.0,134.5 1094.0,140.8 1089.0,137.7" fill="#2aa8e8" />
<rect x="1060.8" y="143.8" width="5.4" height="5.4" fill="#161616"/>
<rect x="1061.3" y="144.3" width="4.4" height="4.4" fill="#fff"/>
<polygon points="1060.3,167.3 1066.6,167.3 1063.5,172.3" fill="#e9b616" />
<rect x="1039.6" y="173.5" width="47.8" height="10.3" rx="2" fill="#161616"/>
<rect x="1040.2" y="174.1" width="46.6" height="9.0" rx="1.5" fill="#1c1c1c"/>
<path d="M1040.2,181.3 H1086.8 V181.8 Q1086.8,183.1 1085.3,183.1 H1041.7 Q1040.2,183.1 1040.2,181.8 Z" fill="#6e3606"/>
<text x="1063.46" y="180.32000000000002" font-size="7.6" fill="#969696" text-anchor="middle" textLength="39.16" lengthAdjust="spacingAndGlyphs">SaveRoofs...</text>
<rect x="1087.8" y="175.9" width="5" height="5" fill="#161616"/>
<rect x="1088.3" y="176.4" width="4" height="4" fill="#8a8a8a"/>
<polygon points="1060.3,207.4 1066.6,207.4 1063.5,212.4" fill="#2aa8e8" />
<rect x="1039.6" y="214.3" width="47.8" height="10.3" rx="2" fill="#161616"/>
<rect x="1040.2" y="214.9" width="46.6" height="9.0" rx="1.5" fill="#3a3a3a"/>
<path d="M1040.2,222.1 H1086.8 V222.6 Q1086.8,223.9 1085.3,223.9 H1041.7 Q1040.2,223.9 1040.2,222.6 Z" fill="#c98522"/>
<text x="1063.46" y="221.06000000000003" font-size="7.6" fill="#e4e4e4" text-anchor="middle" textLength="34.97" lengthAdjust="spacingAndGlyphs">RoofsMatte</text>
<rect x="1060.8" y="225.3" width="5.4" height="5.4" fill="#161616"/>
<rect x="1061.3" y="225.8" width="4.4" height="4.4" fill="#fff"/>
<polygon points="1048.1,268.6 1054.5,268.6 1051.3,273.6" fill="#e8e8e8" />
<polygon points="1072.5,268.6 1078.9,268.6 1075.7,273.6" fill="#e9b616" />
<polygon points="1048.1,291.8 1054.5,291.8 1051.3,286.8" fill="#7cb800" />
<polygon points="1072.5,291.8 1078.9,291.8 1075.7,286.8" fill="#9c9c9c" />
<rect x="1039.6" y="275.4" width="47.8" height="10.3" rx="2" fill="#161616"/>
<rect x="1040.2" y="276.0" width="46.6" height="9.0" rx="1.5" fill="#3a3a3a"/>
<path d="M1040.2,283.2 H1086.8 V283.7 Q1086.8,285.0 1085.3,285.0 H1041.7 Q1040.2,285.0 1040.2,283.7 Z" fill="#2f7d52"/>
<text x="1063.46" y="282.17" font-size="7.6" fill="#e4e4e4" text-anchor="middle" textLength="39.15" lengthAdjust="spacingAndGlyphs">MatteContr...</text>
<rect x="1032.8" y="277.6" width="5.4" height="5.4" fill="#161616"/>
<rect x="1033.3" y="278.1" width="4.4" height="4.4" fill="#fff"/>
<polygon points="1094.0,277.1 1094.0,283.4 1089.0,280.3" fill="#2aa8e8" />
<rect x="889.1" y="71.60000000000001" width="40.1" height="37.0" rx="2.6" fill="#151515"/>
<rect x="889.9" y="72.4" width="38.5" height="35.2" rx="2" fill="#333"/>
<rect x="891.5" y="78.9" width="35.3" height="19" fill="#000"/>
<path d="M889.9,105.80000000000001 H928.4 V106.10000000000001 Q928.4,107.60000000000001 926.4,107.60000000000001 H891.9 Q889.9,107.60000000000001 889.9,106.10000000000001 Z" fill="#c98708"/>
<text x="909.1" y="77.30000000000001" font-size="4.9" fill="#d8d8d8" text-anchor="middle" textLength="19.41" lengthAdjust="spacingAndGlyphs">Polygon1</text>
<rect x="893.1" y="101.80000000000001" width="1.4" height="1.4" fill="#ccc" transform="rotate(45 893.8 102.5)"/>
<rect x="893.1" y="89.05000000000001" width="3" height="0.7" fill="#e8e8e8"/>
<rect x="889.1" y="112.5" width="40.1" height="37.0" rx="2.6" fill="#151515"/>
<rect x="889.9" y="113.3" width="38.5" height="35.2" rx="2" fill="#333"/>
<rect x="891.5" y="119.8" width="35.3" height="19" fill="#000"/>
<path d="M889.9,146.7 H928.4 V147.0 Q928.4,148.5 926.4,148.5 H891.9 Q889.9,148.5 889.9,147.0 Z" fill="#c98708"/>
<text x="909.1" y="118.2" font-size="4.9" fill="#d8d8d8" text-anchor="middle" textLength="19.41" lengthAdjust="spacingAndGlyphs">Polygon2</text>
<rect x="893.1" y="142.7" width="1.4" height="1.4" fill="#ccc" transform="rotate(45 893.8 143.4)"/>
<rect x="893.1" y="129.95000000000002" width="3" height="0.7" fill="#e8e8e8"/>
<rect x="903.9" y="129.85000000000002" width="0.9" height="0.9" fill="#e8e8e8"/>
<rect x="889.1" y="173.6" width="40.1" height="37.0" rx="2.6" fill="#151515"/>
<rect x="889.9" y="174.4" width="38.5" height="35.2" rx="2" fill="#333"/>
<rect x="891.5" y="180.9" width="35.3" height="19" fill="#000"/>
<path d="M889.9,207.8 H928.4 V208.10000000000002 Q928.4,209.60000000000002 926.4,209.60000000000002 H891.9 Q889.9,209.60000000000002 889.9,208.10000000000002 Z" fill="#c98708"/>
<text x="909.1" y="179.3" font-size="4.9" fill="#d8d8d8" text-anchor="middle" textLength="19.41" lengthAdjust="spacingAndGlyphs">Polygon3</text>
<rect x="893.1" y="203.8" width="1.4" height="1.4" fill="#ccc" transform="rotate(45 893.8 204.5)"/>
<rect x="893.1" y="191.05" width="3" height="0.7" fill="#e8e8e8"/>
<rect x="903.9" y="190.95000000000002" width="0.9" height="0.9" fill="#e8e8e8"/>
<rect x="913.9" y="190.85" width="5" height="1.1" fill="#e8e8e8"/>
<polygon points="883.7,73.0 883.7,79.4 888.7,76.2" fill="#2aa8e8" />
<rect x="906.5" y="108.5" width="5.4" height="5.4" fill="#161616"/>
<rect x="907.0" y="109.0" width="4.4" height="4.4" fill="#fff"/>
<rect x="906.5" y="149.5" width="5.4" height="5.4" fill="#161616"/>
<rect x="907.0" y="150.0" width="4.4" height="4.4" fill="#fff"/>
<polygon points="906.0,168.5 912.3,168.5 909.2,173.5" fill="#2aa8e8" />
<rect x="906.5" y="210.5" width="5.4" height="5.4" fill="#161616"/>
<rect x="907.0" y="211.0" width="4.4" height="4.4" fill="#fff"/>
<polygon points="906.0,228.0 912.3,228.0 909.2,233.0" fill="#e9b616" />
<rect x="886.0" y="234.4" width="46.0" height="10.3" rx="2" fill="#161616"/>
<rect x="886.6" y="235.0" width="44.8" height="9.0" rx="1.5" fill="#3a3a3a"/>
<path d="M886.6,242.2 H931.4 V242.7 Q931.4,244.0 929.9,244.0 H888.1 Q886.6,244.0 886.6,242.7 Z" fill="#b98c5e"/>
<text x="887.4" y="241.2" font-size="7.6" fill="#e4e4e4" text-anchor="start" textLength="35.48" lengthAdjust="spacingAndGlyphs">PlanarTra...</text>
<rect x="878.3" y="236.5" width="5.4" height="5.4" fill="#161616"/>
<rect x="878.8" y="237.0" width="4.4" height="4.4" fill="#fff"/>
<polygon points="906.0,251.1 912.3,251.1 909.2,246.1" fill="#2aa8e8" />
<circle cx="927.5" cy="238.7" r="2.1" fill="#e6e6e6"/><circle cx="928.1" cy="238.7" r="0.9" fill="#1a1a1a"/>
<rect x="730.8" y="275.4" width="47.4" height="10.3" rx="2" fill="#161616"/>
<rect x="731.4" y="276.0" width="46.2" height="9.0" rx="1.5" fill="#3a3a3a"/>
<path d="M731.4,283.2 H777.6 V283.7 Q777.6,285.0 776.1,285.0 H732.9 Q731.4,285.0 731.4,283.7 Z" fill="#8238a4"/>
<text x="754.5" y="282.17" font-size="7.6" fill="#e4e4e4" text-anchor="middle" textLength="22.81" lengthAdjust="spacingAndGlyphs">UVMap</text>
<rect x="724.3" y="277.6" width="5.4" height="5.4" fill="#161616"/>
<rect x="724.8" y="278.1" width="4.4" height="4.4" fill="#fff"/>
<polygon points="784.7,277.1 784.7,283.4 779.7,280.3" fill="#2aa8e8" />
<rect x="792.6" y="316.1" width="47.2" height="10.3" rx="2" fill="#161616"/>
<rect x="793.2" y="316.7" width="46.0" height="9.0" rx="1.5" fill="#3a3a3a"/>
<path d="M793.2,323.9 H839.2 V324.4 Q839.2,325.7 837.7,325.7 H794.7 Q793.2,325.7 793.2,324.4 Z" fill="#8a4a2a"/>
<text x="816.2" y="322.90999999999997" font-size="7.6" fill="#e4e4e4" text-anchor="middle" textLength="43.34" lengthAdjust="spacingAndGlyphs">STMapper1_1</text>
<polygon points="785.8,317.9 785.8,324.2 790.8,321.0" fill="#e9b616" />
<polygon points="846.5,317.9 846.5,324.2 841.5,321.0" fill="#7cb800" />
<rect x="813.9" y="326.9" width="5.4" height="5.4" fill="#161616"/>
<rect x="814.4" y="327.4" width="4.4" height="4.4" fill="#fff"/>
<rect x="915.4" y="316.1" width="47.4" height="10.3" rx="2" fill="#161616"/>
<rect x="916.0" y="316.7" width="46.2" height="9.0" rx="1.5" fill="#3a3a3a"/>
<path d="M916.0,323.9 H962.2 V324.4 Q962.2,325.7 960.7,325.7 H917.5 Q916.0,325.7 916.0,324.4 Z" fill="#8238a4"/>
<text x="939.1" y="322.90999999999997" font-size="7.6" fill="#e4e4e4" text-anchor="middle" textLength="38.02" lengthAdjust="spacingAndGlyphs">Roof_Height</text>
<rect x="909.3" y="318.3" width="5.4" height="5.4" fill="#161616"/>
<rect x="909.8" y="318.8" width="4.4" height="4.4" fill="#fff"/>
<polygon points="969.5,317.9 969.5,324.2 964.5,321.0" fill="#2aa8e8" />
<rect x="1163.1" y="356.8" width="37.1" height="10.3" rx="2" fill="#161616"/>
<rect x="1163.7" y="357.4" width="35.9" height="9.0" rx="1.5" fill="#3a3a3a"/>
<path d="M1163.7,364.6 H1199.6 V365.1 Q1199.6,366.4 1198.1,366.4 H1165.2 Q1163.7,366.4 1163.7,365.1 Z" fill="#8238a4"/>
<text x="1165.5" y="363.45" font-size="7.6" fill="#e4e4e4" text-anchor="start">D</text>
<polygon points="1155.8,358.6 1155.8,364.9 1160.8,361.8" fill="#2aa8e8" />
<polygon points="751.9,411.9 758.1,411.9 755.0,416.9" fill="#e9b616" />
<rect x="751" y="418.1" width="8.6" height="9.6" rx="1.8" fill="#161616"/>
<rect x="751.7" y="418.8" width="7.2" height="8.2" rx="1.3" fill="#a44fd6"/>
<rect x="760.5" y="420.2" width="5.4" height="5.4" fill="#161616"/>
<rect x="761.0" y="420.7" width="4.4" height="4.4" fill="#fff"/>
<polygon points="878.7,419.7 878.7,426.0 883.7,422.9" fill="#e9b616" />
<polygon points="906.5,411.2 912.8,411.2 909.6,416.2" fill="#7cb800" />
<rect x="885.2" y="418.0" width="47.0" height="10.3" rx="2" fill="#161616"/>
<rect x="885.8" y="418.6" width="45.8" height="9.0" rx="1.5" fill="#3a3a3a"/>
<path d="M885.8,425.8 H931.6 V426.3 Q931.6,427.6 930.1,427.6 H887.3 Q885.8,427.6 885.8,426.3 Z" fill="#8a8a8a"/>
<text x="908.7" y="424.76" font-size="7.6" fill="#e4e4e4" text-anchor="middle" textLength="33.84" lengthAdjust="spacingAndGlyphs">Texture1_1</text>
<polygon points="938.8,419.7 938.8,426.0 933.8,422.9" fill="#2aa8e8" />
<rect x="906.9" y="428.8" width="5.4" height="5.4" fill="#161616"/>
<rect x="907.4" y="429.3" width="4.4" height="4.4" fill="#fff"/>
<rect x="1163.1" y="418.0" width="37.1" height="10.3" rx="2" fill="#161616"/>
<rect x="1163.7" y="418.6" width="35.9" height="9.0" rx="1.5" fill="#3a3a3a"/>
<path d="M1163.7,425.8 H1199.6 V426.3 Q1199.6,427.6 1198.1,427.6 H1165.2 Q1163.7,427.6 1163.7,426.3 Z" fill="#8fb81c"/>
<text x="1165.5" y="424.56" font-size="7.6" fill="#e4e4e4" text-anchor="start">B</text>
<polygon points="844.4,451.9 850.6,451.9 847.5,456.9" fill="#2aa8e8" />
<polygon points="816.8,460.5 816.8,466.8 821.8,463.6" fill="#e9b616" />
<polygon points="877.8,460.5 877.8,466.8 872.8,463.6" fill="#7cb800" />
<rect x="823.4" y="458.7" width="47.4" height="10.3" rx="2" fill="#161616"/>
<rect x="824.0" y="459.3" width="46.2" height="9.0" rx="1.5" fill="#3a3a3a"/>
<path d="M824.0,466.5 H870.2 V467.0 Q870.2,468.3 868.7,468.3 H825.5 Q824.0,468.3 824.0,467.0 Z" fill="#8a8a8a"/>
<rect x="822.5" y="457.7" width="49.2" height="12.2" rx="2.6" fill="none" stroke="#b23232" stroke-width="1.1"/>
<text x="847.1" y="465.5" font-size="7.6" fill="#e4e4e4" text-anchor="middle" textLength="38.40" lengthAdjust="spacingAndGlyphs">Merge9_1_1</text>
<rect x="826.6" y="469.2" width="11.6" height="6.2" rx="1.6" fill="#1b1b1b"/>
<circle cx="830.3" cy="472.2" r="1.3" fill="#0c0c0c"/><rect x="834" y="471.2" width="2" height="2" fill="#d8d8d8"/>
<rect x="844.9" y="469.6" width="5.4" height="5.4" fill="#161616"/>
<rect x="845.4" y="470.1" width="4.4" height="4.4" fill="#fff"/>
<polygon points="844.5,493.1 850.8,493.1 847.6,498.1" fill="#e9b616" />
<rect x="824.0" y="499.4" width="46.6" height="10.3" rx="2" fill="#161616"/>
<rect x="824.6" y="500.0" width="45.4" height="9.0" rx="1.5" fill="#3a3a3a"/>
<path d="M824.6,507.2 H870.0 V507.7 Q870.0,509.0 868.5,509.0 H826.1 Q824.6,509.0 824.6,507.7 Z" fill="#8a8a8a"/>
<text x="847.3" y="506.24" font-size="7.6" fill="#e4e4e4" text-anchor="middle" textLength="23.19" lengthAdjust="spacingAndGlyphs">Merge9</text>
<polygon points="817.1,501.2 817.1,507.5 822.1,504.3" fill="#7cb800" />
<polygon points="844.5,516.0 850.8,516.0 847.6,511.0" fill="#2aa8e8" />
<rect x="871.9" y="501.6" width="5.4" height="5.4" fill="#161616"/>
<rect x="872.4" y="502.1" width="4.4" height="4.4" fill="#fff"/>
<polygon points="971.1,501.2 971.1,507.5 976.1,504.3" fill="#e9b616" />
<polygon points="998.9,492.8 1005.1,492.8 1002.0,497.8" fill="#2aa8e8" />
<rect x="977.8" y="499.4" width="47.0" height="10.3" rx="2" fill="#161616"/>
<rect x="978.4" y="500.0" width="45.8" height="9.0" rx="1.5" fill="#3a3a3a"/>
<path d="M978.4,507.2 H1024.2 V507.7 Q1024.2,509.0 1022.7,509.0 H979.9 Q978.4,509.0 978.4,507.7 Z" fill="#8a8a8a"/>
<text x="1001.3" y="506.24" font-size="7.6" fill="#e4e4e4" text-anchor="middle" textLength="43.73" lengthAdjust="spacingAndGlyphs">SharpenEdg...</text>
<rect x="1026.3" y="501.6" width="5.4" height="5.4" fill="#161616"/>
<rect x="1026.8" y="502.1" width="4.4" height="4.4" fill="#fff"/>
<polygon points="1063.5,501.2 1063.5,507.5 1068.5,504.3" fill="#e9b616" />
<polygon points="1090.8,492.8 1097.2,492.8 1094.0,497.8" fill="#2aa8e8" />
<rect x="1069.8" y="499.4" width="47.0" height="10.3" rx="2" fill="#161616"/>
<rect x="1070.4" y="500.0" width="45.8" height="9.0" rx="1.5" fill="#3a3a3a"/>
<path d="M1070.4,507.2 H1116.2 V507.7 Q1116.2,509.0 1114.7,509.0 H1071.9 Q1070.4,509.0 1070.4,507.7 Z" fill="#8fb81c"/>
<text x="1093.3" y="506.24" font-size="7.6" fill="#e4e4e4" text-anchor="middle" textLength="42.96" lengthAdjust="spacingAndGlyphs">BrightnessC...</text>
<rect x="1118.3" y="501.6" width="5.4" height="5.4" fill="#161616"/>
<rect x="1118.8" y="502.1" width="4.4" height="4.4" fill="#fff"/>
<polygon points="1155.5,501.2 1155.5,507.5 1160.5,504.3" fill="#7cb800" />
<rect x="1163.1" y="499.4" width="37.1" height="10.3" rx="2" fill="#161616"/>
<rect x="1163.7" y="500.0" width="35.9" height="9.0" rx="1.5" fill="#3a3a3a"/>
<path d="M1163.7,507.2 H1199.6 V507.7 Q1199.6,509.0 1198.1,509.0 H1165.2 Q1163.7,509.0 1163.7,507.7 Z" fill="#8a8a8a"/>
<text x="1165.5" y="506.04" font-size="7.6" fill="#e4e4e4" text-anchor="start">R</text>
<polygon points="770.9,533.1 777.1,533.1 774.0,538.1" fill="#7cb800" />
<polygon points="794.5,533.1 800.8,533.1 797.6,538.1" fill="#e8e8e8" />
<polygon points="1048.0,533.1 1054.4,533.1 1051.2,538.1" fill="#7cb800" />
<polygon points="1072.8,533.1 1079.2,533.1 1076.0,538.1" fill="#e8e8e8" />
<rect x="762" y="538.6" width="47" height="4" rx="1.5" fill="#161616"/>
<rect x="854" y="538.6" width="47" height="4" rx="1.5" fill="#161616"/>
<rect x="947" y="538.6" width="47" height="4" rx="1.5" fill="#161616"/>
<rect x="1039.5" y="538.6" width="47.5" height="4" rx="1.5" fill="#161616"/>
<rect x="1163" y="538.6" width="37" height="4" rx="1.5" fill="#161616"/>
</g>
<text x="5.6" y="45.9" font-size="8.2" fill="#9a9a9a" text-anchor="start" textLength="19.92" lengthAdjust="spacingAndGlyphs">597%</text>
<polyline points="28.4,41.7 31,44.4 33.6,41.7" fill="none" stroke="#858585" stroke-width="0.9"/>
<rect x="38.6" y="36" width="1.2" height="13.600000000000001" fill="#111"/>
<rect x="45.6" y="39.4" width="10" height="7.2" fill="#2a2a2a" stroke="#6a6a6a" stroke-width="0.8"/>
<text x="50.6" y="45.2" font-size="5.2" fill="#999" text-anchor="middle">A</text>
<polyline points="62.4,41.7 65,44.4 67.6,41.7" fill="none" stroke="#858585" stroke-width="0.9"/>
<rect x="74.4" y="39.4" width="10" height="7.2" fill="#222" stroke="#6a6a6a" stroke-width="0.8"/>
<rect x="79" y="40.2" width="4.6" height="3.6" fill="#6a6a6a"/>
<polyline points="91.0,41.7 93.6,44.4 96.19999999999999,41.7" fill="none" stroke="#858585" stroke-width="0.9"/>
<rect x="101.80000000000001" y="36" width="1.2" height="13.600000000000001" fill="#111"/>
<text x="354.5" y="45.9" font-size="8" fill="#ececec" text-anchor="middle" font-weight="700" textLength="40.77" lengthAdjust="spacingAndGlyphs">Merge9_1_1</text>
<rect x="510.4" y="36" width="1.2" height="13.600000000000001" fill="#111"/>
<rect x="517.4" y="39.4" width="10.4" height="7.2" fill="#222" stroke="#6a6a6a" stroke-width="0.8"/>
<rect x="521" y="41.6" width="4.4" height="2.8" fill="#333" stroke="#444" stroke-width="0.5"/>
<polyline points="534.0,41.7 536.6,44.4 539.2,41.7" fill="none" stroke="#858585" stroke-width="0.9"/>
<text x="557.2" y="45.9" font-size="8" fill="#9a9a9a" text-anchor="start" textLength="24.84" lengthAdjust="spacingAndGlyphs">Default</text>
<polyline points="594.4,41.7 597,44.4 599.6,41.7" fill="none" stroke="#858585" stroke-width="0.9"/>
<circle cx="612" cy="41.6" r="2.9" fill="#3a3a3a" fill-opacity="0.7" stroke="#5a5a5a" stroke-width="0.7"/>
<circle cx="609.3" cy="45.2" r="2.9" fill="#3a3a3a" fill-opacity="0.7" stroke="#5a5a5a" stroke-width="0.7"/>
<circle cx="614.7" cy="45.2" r="2.9" fill="#3a3a3a" fill-opacity="0.7" stroke="#5a5a5a" stroke-width="0.7"/>
<polyline points="623.4,41.7 626,44.4 628.6,41.7" fill="none" stroke="#858585" stroke-width="0.9"/>
<rect x="635.6" y="38.8" width="9.2" height="8.4" fill="#d0d0d0"/>
<rect x="636.5" y="39.70" width="1.9" height="1.7" fill="#1f1f1f"/>
<rect x="636.5" y="42.35" width="1.9" height="1.7" fill="#1f1f1f"/>
<rect x="636.5" y="45.00" width="1.9" height="1.7" fill="#1f1f1f"/>
<rect x="639.4" y="39.70" width="1.9" height="1.7" fill="#1f1f1f"/>
<rect x="639.4" y="42.35" width="1.9" height="1.7" fill="#1f1f1f"/>
<rect x="639.4" y="45.00" width="1.9" height="1.7" fill="#1f1f1f"/>
<rect x="642.3" y="39.70" width="1.9" height="1.7" fill="#1f1f1f"/>
<rect x="642.3" y="42.35" width="1.9" height="1.7" fill="#1f1f1f"/>
<rect x="642.3" y="45.00" width="1.9" height="1.7" fill="#1f1f1f"/>
<polyline points="652.0,41.7 654.6,44.4 657.2,41.7" fill="none" stroke="#858585" stroke-width="0.9"/>
<rect x="662.4" y="36" width="1.2" height="13.600000000000001" fill="#111"/>
<rect x="669.4" y="40.6" width="4.2" height="6" fill="none" stroke="#6a6a6a" stroke-width="0.8"/><rect x="674.8" y="40.6" width="4.2" height="6" fill="none" stroke="#6a6a6a" stroke-width="0.8"/>
<rect x="685.0" y="36" width="1.2" height="13.600000000000001" fill="#111"/>
<circle cx="692.4" cy="43.2" r="1.15" fill="#919191"/>
<circle cx="696.9" cy="43.2" r="1.15" fill="#919191"/>
<circle cx="701.4" cy="43.2" r="1.15" fill="#919191"/>
<text x="713.8" y="45.9" font-size="8.2" fill="#e6e6e6" text-anchor="start" font-weight="700" textLength="22.18" lengthAdjust="spacingAndGlyphs">Nodes</text>
<rect x="1146.6000000000001" y="36" width="1.2" height="13.600000000000001" fill="#111"/>
<circle cx="1153.8" cy="43.2" r="1.15" fill="#919191"/>
<circle cx="1158.3" cy="43.2" r="1.15" fill="#919191"/>
<circle cx="1162.8" cy="43.2" r="1.15" fill="#919191"/>
<rect x="327.7" y="11" width="1" height="18.5" fill="#3a3a3a"/>
<rect x="432.0" y="11" width="1" height="18.5" fill="#3a3a3a"/>
<rect x="561.0" y="11" width="1" height="18.5" fill="#3a3a3a"/>
<rect x="689.0" y="11" width="1" height="18.5" fill="#3a3a3a"/>
<rect x="769.0" y="11" width="1" height="18.5" fill="#3a3a3a"/>
<rect x="233.5" y="15.3" width="12.8" height="9.4" rx="0.8" fill="#262626" stroke="#5a5a5a" stroke-width="0.9"/>
<polygon points="234.4,16.2 245.4,23.8 234.4,23.8" fill="#3a3a3a"/>
<line x1="234.6" y1="17.60" x2="244.60" y2="23.7" stroke="#707070" stroke-width="0.45"/>
<line x1="234.6" y1="19.05" x2="242.50" y2="23.7" stroke="#707070" stroke-width="0.45"/>
<line x1="234.6" y1="20.50" x2="240.40" y2="23.7" stroke="#707070" stroke-width="0.45"/>
<line x1="234.6" y1="21.95" x2="238.30" y2="23.7" stroke="#707070" stroke-width="0.45"/>
<line x1="234.6" y1="23.40" x2="236.20" y2="23.7" stroke="#707070" stroke-width="0.45"/>
<g filter="url(#b1)"><rect x="258.3" y="15.8" width="12" height="8.8" fill="#363636"/><circle cx="261.4" cy="18.6" r="2.5" fill="#4a4a4a"/><circle cx="267.4" cy="18.8" r="2.3" fill="#4c4c4c"/><ellipse cx="264" cy="23.2" rx="3.6" ry="1.5" fill="#444"/><rect x="263.6" y="16" width="1.2" height="5" fill="#2a2a2a"/></g>
<rect x="282" y="15" width="13.2" height="10.6" fill="#303030"/>
<text x="288.7" y="24.2" font-family="'Liberation Serif', serif" font-weight="700" font-size="11" fill="#adadad" text-anchor="middle">T</text>
<path d="M319.4,14.4 L320.8,15.5 L315.2,22.6 L313.4,21.3 Z" fill="#a4a4a4"/>
<path d="M313.2,21.5 L315.2,22.9 Q314.6,25.4 311,25.6 Q312.2,23.6 313.2,21.5 Z" fill="#8c8c8c"/>
<path d="M307.2,24.4 Q309.8,23.6 311.4,20.4 Q312.4,18.4 310.6,18.6 Q308.8,19 308,20" fill="none" stroke="#5c5c5c" stroke-width="0.9"/>
<circle cx="343.40" cy="15.40" r="1.0" fill="#7a7a7a"/>
<circle cx="346.65" cy="16.75" r="0.7" fill="#5a5a5a"/>
<circle cx="348.00" cy="20.00" r="1.0" fill="#5a5a5a"/>
<circle cx="346.65" cy="23.25" r="0.7" fill="#5a5a5a"/>
<circle cx="343.40" cy="24.60" r="1.0" fill="#7a7a7a"/>
<circle cx="340.15" cy="23.25" r="0.7" fill="#7a7a7a"/>
<circle cx="338.80" cy="20.00" r="1.0" fill="#7a7a7a"/>
<circle cx="340.15" cy="16.75" r="0.7" fill="#5a5a5a"/>
<circle cx="343.6" cy="20" r="0.9" fill="#6a6a6a"/>
<rect x="363.4" y="15.4" width="10.6" height="8.6" fill="#2c2c2c" stroke="#4a4a4a" stroke-width="0.6"/>
<path d="M367,15.4 V24 M370.5,15.4 V24 M363.4,18.3 H374 M363.4,21.1 H374" stroke="#444" stroke-width="0.5" fill="none"/>
<path d="M363,24.2 C368,23.6 368.6,16 374.4,15" stroke="#777" stroke-width="0.9" fill="none"/>
<circle cx="393.2" cy="20.2" r="2.7" fill="none" stroke="#888" stroke-width="0.8"/>
<path d="M393.2,17.5 a2.7,2.7 0 0 1 0,5.4 z" fill="#888"/>
<circle cx="398.20" cy="20.20" r="0.65" fill="#777"/>
<circle cx="396.74" cy="23.74" r="0.65" fill="#777"/>
<circle cx="393.20" cy="25.20" r="0.65" fill="#777"/>
<circle cx="389.66" cy="23.74" r="0.65" fill="#777"/>
<circle cx="388.20" cy="20.20" r="0.65" fill="#777"/>
<circle cx="389.66" cy="16.66" r="0.65" fill="#777"/>
<circle cx="393.20" cy="15.20" r="0.65" fill="#777"/>
<circle cx="396.74" cy="16.66" r="0.65" fill="#777"/>
<path d="M416.6,15.2 C418.2,17.8 420.2,20 420.2,22 A3.6,3.6 0 0 1 413,22 C413,20 415,17.8 416.6,15.2 Z" fill="#8e8e8e"/>
<circle cx="417.3" cy="21.6" r="0.9" fill="#3a3a3a"/>
<rect x="445.5" y="15.4" width="10" height="7.2" fill="none" stroke="#3a3a3a" stroke-width="0.7"/>
<rect x="444" y="17.4" width="10" height="7.2" fill="#333" stroke="#666" stroke-width="0.8"/>
<rect x="444.4" y="17.8" width="9.2" height="6.4" fill="url(#tg)"/>
<path d="M440.6,18 V21.6 Q440.6,22.6 441.8,22.6 H443.6" fill="none" stroke="#6a6a6a" stroke-width="0.8"/><polygon points="443,21 445,22.6 443,24.2" fill="#6a6a6a"/>
<rect x="470.5" y="15.4" width="10.4" height="7.2" fill="none" stroke="#3a3a3a" stroke-width="0.7"/>
<rect x="468.6" y="17.4" width="10.4" height="7.2" fill="#333" stroke="#666" stroke-width="0.8"/>
<rect x="469" y="17.8" width="9.6" height="6.4" fill="url(#tg)"/>
<path d="M464.6,17 V22 Q464.6,23 465.8,23 H468.4 M464.6,19.6 H468.4" fill="none" stroke="#6a6a6a" stroke-width="0.8"/><polygon points="468.6,18.6 470.4,19.6 468.6,20.6" fill="#777"/><polygon points="468.6,22 470.4,23 468.6,24" fill="#777"/>
<rect x="490" y="14.6" width="10.2" height="6.8" fill="#444"/>
<rect x="496.5" y="16.6" width="7.5" height="6" fill="#2a2a2a" opacity="0.6"/>
<rect x="492.6" y="19.2" width="9.2" height="6.4" rx="0.6" fill="#2c2c2c" stroke="#707070" stroke-width="0.9"/>
<rect x="514.2" y="15" width="13.6" height="9" fill="url(#tg2)"/>
<circle cx="521.2" cy="19.4" r="2.5" fill="#111"/>
<rect x="515" y="25.3" width="12.4" height="0.7" fill="#444"/><rect x="518.8" y="24.9" width="1.6" height="1.5" fill="#999"/>
<rect x="539.4" y="15.6" width="13" height="8.6" rx="1" fill="#343434" stroke="#5a5a5a" stroke-width="0.8"/>
<polygon points="551,17 553.8,18.4 551,19.8" fill="#8a8a8a"/><polygon points="541.4,20 538.4,21.4 541.4,22.8" fill="#8a8a8a"/>
<rect x="541" y="23.6" width="2.4" height="1.2" fill="#212121"/><rect x="549" y="15" width="2" height="1.2" fill="#212121"/>
<rect x="572.6" y="15.8" width="8.6" height="8.4" fill="none" stroke="#4a4a4a" stroke-width="0.7"/>
<rect x="571.8000000000001" y="15.0" width="1.6" height="1.6" fill="#777"/>
<rect x="580.4000000000001" y="15.0" width="1.6" height="1.6" fill="#777"/>
<rect x="571.8000000000001" y="23.4" width="1.6" height="1.6" fill="#777"/>
<rect x="580.4000000000001" y="23.4" width="1.6" height="1.6" fill="#777"/>
<circle cx="601.5" cy="20.3" r="4.6" fill="none" stroke="#5e5e5e" stroke-width="0.8"/>
<rect x="600.9" y="15.1" width="1.2" height="1.2" fill="#777"/>
<rect x="600.9" y="24.299999999999997" width="1.2" height="1.2" fill="#777"/>
<rect x="596.3" y="19.7" width="1.2" height="1.2" fill="#777"/>
<rect x="605.5" y="19.7" width="1.2" height="1.2" fill="#777"/>
<path d="M619.6,22.4 L624.4,17.6 L627.6,14 M624.4,17.6 Q629.5,17.6 631.8,20.4 M624.4,17.6 Q623.4,22 624.8,25.8" fill="none" stroke="#6a6a6a" stroke-width="0.8"/>
<rect x="618.8000000000001" y="21.599999999999998" width="1.6" height="1.6" fill="#7c7c7c"/>
<rect x="623.6" y="16.8" width="1.6" height="1.6" fill="#7c7c7c"/>
<rect x="626.8000000000001" y="13.2" width="1.6" height="1.6" fill="#7c7c7c"/>
<rect x="631.0" y="19.599999999999998" width="1.6" height="1.6" fill="#7c7c7c"/>
<rect x="624.0" y="25.0" width="1.6" height="1.6" fill="#7c7c7c"/>
<path d="M643.4,24 Q650,11.4 656.8,23" fill="none" stroke="#777" stroke-width="0.9"/>
<path d="M645.6,16.4 H651.6" stroke="#555" stroke-width="0.6"/>
<rect x="642.6999999999999" y="23.3" width="1.4" height="1.4" fill="#7c7c7c"/>
<rect x="656.0999999999999" y="22.3" width="1.4" height="1.4" fill="#7c7c7c"/>
<rect x="644.9" y="15.7" width="1.4" height="1.4" fill="#7c7c7c"/>
<rect x="650.9" y="15.7" width="1.4" height="1.4" fill="#7c7c7c"/>
<path d="M667.4,16 Q670.6,20.4 674,17 Q677,14 679.4,18.4" fill="none" stroke="#6e6e6e" stroke-width="0.8"/>
<path d="M668.6,23.4 Q671,19.4 674,22 Q677.4,25.4 680.6,21.6" fill="none" stroke="#6e6e6e" stroke-width="0.8"/>
<rect x="670.1999999999999" y="15.0" width="1.2" height="1.2" fill="#6a6a6a"/>
<rect x="675.4" y="15.200000000000001" width="1.2" height="1.2" fill="#6a6a6a"/>
<rect x="681.1999999999999" y="15.200000000000001" width="1.2" height="1.2" fill="#6a6a6a"/>
<rect x="666.0" y="20.799999999999997" width="1.2" height="1.2" fill="#6a6a6a"/>
<rect x="671.4" y="20.599999999999998" width="1.2" height="1.2" fill="#6a6a6a"/>
<rect x="677.0" y="20.599999999999998" width="1.2" height="1.2" fill="#6a6a6a"/>
<polygon points="699.2,23.6 705.6,21.6 703.6,26" fill="#2e2e2e" stroke="#4e4e4e" stroke-width="0.5"/>
<path d="M703,23 L710,15.6" stroke="#4a4a4a" stroke-width="0.6"/>
<circle cx="705.4" cy="14.6" r="0.5" fill="#707070"/>
<circle cx="707" cy="17" r="0.6" fill="#707070"/>
<circle cx="709.2" cy="15.2" r="0.6" fill="#707070"/>
<circle cx="711.4" cy="17.6" r="0.5" fill="#707070"/>
<circle cx="706.4" cy="19.4" r="0.6" fill="#707070"/>
<circle cx="708.6" cy="19.6" r="0.5" fill="#707070"/>
<circle cx="704.8" cy="21.6" r="0.5" fill="#707070"/>
<circle cx="710.6" cy="14.6" r="0.4" fill="#707070"/>
<circle cx="706" cy="16.2" r="0.4" fill="#707070"/>
<circle cx="723.6" cy="14.6" r="0.4" fill="#666"/>
<circle cx="724.6" cy="16.8" r="0.4" fill="#666"/>
<circle cx="725.6" cy="14.6" r="0.4" fill="#666"/>
<circle cx="726.6" cy="16.8" r="0.4" fill="#666"/>
<circle cx="727.6" cy="14.6" r="0.4" fill="#666"/>
<circle cx="728.6" cy="16.8" r="0.4" fill="#666"/>
<circle cx="729.6" cy="14.6" r="0.4" fill="#666"/>
<circle cx="730.6" cy="16.8" r="0.4" fill="#666"/>
<circle cx="731.6" cy="14.6" r="0.4" fill="#666"/>
<circle cx="732.6" cy="16.8" r="0.4" fill="#666"/>
<circle cx="733.6" cy="14.6" r="0.4" fill="#666"/>
<circle cx="734.6" cy="16.8" r="0.4" fill="#666"/>
<circle cx="735.6" cy="14.6" r="0.4" fill="#666"/>
<circle cx="736.6" cy="16.8" r="0.4" fill="#666"/>
<path d="M724.2,20.8 A3.1,3.1 0 1 0 730.2,20.8" fill="none" stroke="#808080" stroke-width="1.7" transform="rotate(-38 727.2 21.6)"/>
<path d="M733.4,17.6 V25.6 M729.6,21.6 H737.2" stroke="#6a6a6a" stroke-width="0.7"/>
<polygon points="733.4,16.8 732.4,18.2 734.4,18.2" fill="#777"/><polygon points="733.4,26.4 732.4,25 734.4,25" fill="#777"/><polygon points="737.8,21.6 736.4,20.6 736.4,22.6" fill="#777"/><polygon points="729,21.6 730.4,20.6 730.4,22.6" fill="#777"/>
<path d="M747.4,16.6 V14.4 H750" fill="none" stroke="#777" stroke-width="0.7"/><path d="M760.6,20 V22.4 H758" fill="none" stroke="#777" stroke-width="0.7"/>
<rect x="749.6" y="15.4" width="8" height="6" fill="#3a3a3a"/>
<rect x="750.1" y="15.899999999999999" width="1" height="1" fill="#6a6a6a"/>
<rect x="752.1" y="17.1" width="1" height="1" fill="#6a6a6a"/>
<rect x="754.3" y="16.3" width="1" height="1" fill="#6a6a6a"/>
<rect x="756.1" y="18.1" width="1" height="1" fill="#6a6a6a"/>
<rect x="751.1" y="19.1" width="1" height="1" fill="#6a6a6a"/>
<rect x="753.3" y="19.7" width="1" height="1" fill="#6a6a6a"/>
<rect x="757.9" y="17.1" width="1" height="1" fill="#6a6a6a"/>
<rect x="755.1" y="20.1" width="1" height="1" fill="#6a6a6a"/>
<path d="M750.4,25.8 L755,21.8" stroke="#4a4a4a" stroke-width="0.6"/>
<polygon points="777.4,22.2 785.4,18.599999999999998 793.4,22.2 785.4,25.8" fill="#313131"/>
<polygon points="783,16.4 790.6,14.4 790.6,21 783,23.4" fill="#6e6e6e"/>
<polygon points="802,22.4 810,18.799999999999997 818,22.4 810,26.0" fill="#313131"/>
<polygon points="805.8,14.6 808.8,21.4 803.2,21.4" fill="#666"/>
<polygon points="811.2,17 815,16 816.4,17.2 816.4,21 812.6,22 811.2,20.8" fill="#5e5e5e"/>
<circle cx="809.8" cy="21.6" r="2.7" fill="#7a7a7a"/>
<polygon points="826,22.6 834,19.0 842,22.6 834,26.200000000000003" fill="#313131"/>
<text x="835.6" y="22" font-family="'Liberation Serif', serif" font-weight="700" font-size="10.6" fill="#a6a6a6" text-anchor="middle">T</text>
<polygon points="849.6,22.6 857.6,19.0 865.6,22.6 857.6,26.200000000000003" fill="#313131"/>
<path d="M851.6,16.4 V20 H854.6" fill="none" stroke="#5a5a5a" stroke-width="0.7"/><polygon points="854.2,18.8 856,20 854.2,21.2" fill="#5a5a5a"/>
<circle cx="861" cy="19.6" r="3" fill="#8a8a8a"/>
<polygon points="874,22.6 882,19.0 890,22.6 882,26.200000000000003" fill="#313131"/>
<path d="M877.2,15 H884 L887,16.6 V23 L884,21.6 H877.2 Z" fill="#2c2c2c" stroke="#8a8a8a" stroke-width="0.7"/><path d="M884,15 V21.6" stroke="#8a8a8a" stroke-width="0.6"/>
<path d="M887,18 L890,16.4 V22.6 L887,21.4" fill="#2c2c2c" stroke="#8a8a8a" stroke-width="0.7"/><rect x="879" y="17" width="3.4" height="2.6" fill="none" stroke="#666" stroke-width="0.5"/>
<polygon points="898.4,22.8 906.4,19.2 914.4,22.8 906.4,26.400000000000002" fill="#313131"/>
<circle cx="903.4" cy="18" r="1.5" fill="#7a7a7a"/><circle cx="908" cy="19.6" r="2.6" fill="#2a2a2a" stroke="#888" stroke-width="0.7"/>
<path d="M911.4,17.4 L913,16.6 M911.8,19.8 H913.4 M911.2,22 L912.6,23 M909.4,23.4 L910,24.8" stroke="#777" stroke-width="0.6"/>
<polygon points="922.6,22.8 931,18.8 939.4,22.8 931,26.8" fill="#313131"/>
<path d="M926.4,20.8 A4.6,4.6 0 0 1 935.6,20.8 Z" fill="#b0b0b0"/>
<path d="M926.4,20.8 A4.6,3 0 0 0 935.6,20.8 Z" fill="#444"/>
<path d="M925.6,15.6 V13.4 H927.6" fill="none" stroke="#888" stroke-width="0.7"/><path d="M939,19.6 V21.6 L937,22.6" fill="none" stroke="#555" stroke-width="0.7"/>
</svg>
</body></html>
